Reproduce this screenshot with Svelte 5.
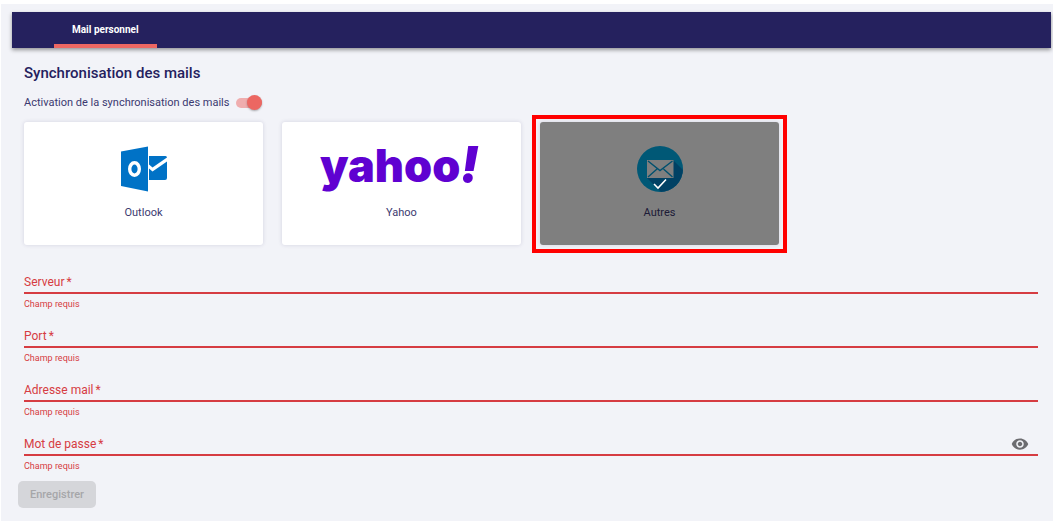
<script>
  let provider = $state("autres");
  let syncEnabled = $state(true);
  let showPassword = $state(false);

  const providers = [
    { id: "outlook", label: "Outlook" },
    { id: "yahoo", label: "Yahoo" },
    { id: "autres", label: "Autres" },
  ];

  const fields = [
    { id: "server", label: "Serveur", type: "text" },
    { id: "port", label: "Port", type: "text" },
    { id: "email", label: "Adresse mail", type: "email" },
    { id: "password", label: "Mot de passe", type: "password" },
  ];

  let values = $state({ server: "", port: "", email: "", password: "" });
  let incomplete = $derived(fields.some((field) => !values[field.id]));

  function inputType(field) {
    return field.type === "password" && showPassword ? "text" : field.type;
  }
</script>

<main class="page">
  <nav class="tabs">
    <a class="tab active" href="#mail">Mail personnel</a>
  </nav>

  <div class="content">
    <h1>Synchronisation des mails</h1>

    <label class="sync">
      <span>Activation de la synchronisation des mails</span>
      <input class="toggle" type="checkbox" role="switch" bind:checked={syncEnabled} />
    </label>

    <div class="providers">
      {#each providers as item}
        <button
          type="button"
          class="card"
          class:selected={provider === item.id}
          aria-pressed={provider === item.id}
          onclick={() => (provider = item.id)}
        >
          {#if item.id === "outlook"}
            <svg width="48" height="46" viewBox="0 0 48 46" aria-hidden="true">
              <path fill="#0072c6" d="M29 10h16.500q1.500 0 1.500 1.500L32.500 21.500 29 18.500z" />
              <path fill="#0072c6" d="M29 22.500l3.500 3L47 15.500V32q0 2-2 2H29z" />
              <path fill="#0072c6" d="M1 5.500L28 .5v45L1 40z" />
              <ellipse cx="14.500" cy="23" rx="4.800" ry="6.200" fill="none" stroke="#fff" stroke-width="3.400" />
            </svg>
          {:else if item.id === "yahoo"}
            <svg class="yahoo" width="164" height="46" viewBox="0 0 164 46" aria-hidden="true">
              <text x="0" y="36">yahoo<tspan class="bang">!</tspan></text>
            </svg>
          {:else}
            <svg width="46" height="46" viewBox="0 0 46 46" aria-hidden="true">
              <defs>
                <clipPath id="disc"><circle cx="23" cy="23" r="23" /></clipPath>
              </defs>
              <circle cx="23" cy="23" r="23" fill="#00b0ed" />
              <path clip-path="url(#disc)" fill="#0082c8" d="M36 14l12 12v22H26L10 32z" />
              <path fill="#fff" d="M10 14h26.500v18H10z" />
              <path
                fill="none"
                stroke="#00a0dc"
                stroke-width="1.400"
                d="M11 15l12 9.500L35.500 15M11 31l9-8M35.500 31l-9-8"
              />
            </svg>
          {/if}
          <span>{item.label}</span>
          {#if provider === item.id}
            <svg class="check" width="14" height="12" viewBox="0 0 14 12" aria-hidden="true">
              <path fill="none" stroke="#fff" stroke-width="1.600" d="M1 6l4 4 8-8.500" />
            </svg>
          {/if}
        </button>
      {/each}
    </div>

    <form id="mail-form">
      {#each fields as field}
        <div class="field">
          <div class="control">
            {#if !values[field.id]}
              <label for={field.id}>{field.label}<span class="star">*</span></label>
            {/if}
            <input
              id={field.id}
              type={inputType(field)}
              aria-label={field.label}
              required
              bind:value={values[field.id]}
            />
            {#if field.type === "password"}
              <button
                type="button"
                class="eye"
                aria-label="Afficher le mot de passe"
                onclick={() => (showPassword = !showPassword)}
              >
                <svg width="18" height="18" viewBox="0 0 24 24" fill="currentColor">
                  <path
                    d="M12 4.500C7 4.500 2.730 7.610 1 12c1.730 4.390 6 7.500 11 7.500s9.270-3.110 11-7.500c-1.730-4.390-6-7.500-11-7.500zM12 17c-2.760 0-5-2.240-5-5s2.240-5 5-5 5 2.240 5 5-2.240 5-5 5zm0-8c-1.660 0-3 1.340-3 3s1.340 3 3 3 3-1.340 3-3-1.340-3-3-3z"
                  />
                </svg>
              </button>
            {/if}
          </div>
          {#if !values[field.id]}
            <p class="error">Champ requis</p>
          {/if}
        </div>
      {/each}
    </form>
  </div>

  <button class="save" form="mail-form" disabled={incomplete}>Enregistrer</button>
</main>

<style>
  :global(body) {
    background: #fff;
  }

  .page {
    box-sizing: border-box;
    min-height: calc(100vh - 4px);
    margin: 4px 0 0 1px;
    padding: 8px 2px 12px 11px;
    background: #f2f3f8;
    color: #25215e;
    font-family: Roboto, sans-serif;
  }

  button,
  input {
    font-family: inherit;
    color: inherit;
  }

  .tabs {
    display: flex;
    height: 36px;
    padding-left: 42px;
    background: #25215e;
    box-shadow: 0 2px 4px rgba(0, 0, 0, 0.4);
  }

  .tab {
    box-sizing: border-box;
    padding: 0 18px;
    border-bottom: 4px solid transparent;
    color: #fff;
    font-size: 10px;
    font-weight: 700;
    line-height: 36px;
    text-decoration: none;
  }

  .tab.active {
    border-color: #ec6762;
  }

  .content {
    padding: 14px 12px 0;
  }

  h1 {
    margin: 0;
    font-size: 15px;
    font-weight: 500;
    line-height: 22px;
  }

  .sync {
    display: flex;
    align-items: center;
    gap: 7px;
    width: fit-content;
    margin-top: 11px;
    color: #3b3970;
    font-size: 11px;
    line-height: 16px;
  }

  .toggle {
    appearance: none;
    position: relative;
    width: 26px;
    height: 10px;
    margin: 0;
    border-radius: 5px;
    background: #c4c4cc;
  }

  .toggle::before {
    content: "";
    position: absolute;
    top: -3px;
    left: 0;
    width: 15px;
    height: 15px;
    border-radius: 50%;
    background: #fff;
    box-shadow: 0 1px 2px rgba(0, 0, 0, 0.3);
  }

  .toggle:checked {
    background: #efadae;
  }

  .toggle:checked::before {
    left: 11px;
    background: #ec6762;
  }

  .providers {
    display: flex;
    flex-wrap: wrap;
    gap: 19px;
    margin-top: 11px;
  }

  .card {
    position: relative;
    display: flex;
    flex-direction: column;
    align-items: center;
    gap: 12px;
    width: 239px;
    padding: 24px 16px;
    border: 0;
    border-radius: 3px;
    background: #fff;
    box-shadow: 0 0 4px rgba(37, 33, 94, 0.15);
    color: #3b3970;
    font-size: 11px;
    line-height: 17px;
  }

  .card.selected::before {
    content: "";
    position: absolute;
    inset: 0;
    border-radius: 3px;
    background: rgba(0, 0, 0, 0.5);
  }

  .card.selected::after {
    content: "";
    position: absolute;
    inset: -7px -8px -8px;
    border: 4px solid #f00;
  }

  .card svg {
    display: block;
    overflow: visible;
  }

  .card .check {
    position: absolute;
    top: 56px;
    left: calc(50% - 7px);
  }

  .yahoo {
    fill: #5f01d1;
    font-family: Inter, sans-serif;
    font-size: 45px;
    font-weight: 900;
  }

  .bang {
    font-size: 49px;
    font-style: italic;
  }

  form {
    margin-top: 27px;
  }

  .field {
    height: 54px;
  }

  .control {
    display: grid;
    grid-template-columns: 1fr auto;
    align-items: center;
    height: 20px;
    margin-right: 1px;
    border-bottom: 2px solid #d63c42;
  }

  .control label {
    grid-area: 1 / 1;
    color: #d63c42;
    font-size: 12px;
    line-height: 20px;
    pointer-events: none;
  }

  .star {
    padding-left: 2px;
  }

  .control input {
    grid-area: 1 / 1;
    min-width: 0;
    padding: 0;
    border: 0;
    outline: 0;
    background: transparent;
    font-size: 12px;
  }

  .eye {
    padding: 0;
    margin-right: 9px;
    border: 0;
    background: none;
    color: #6c6c70;
  }

  .eye svg {
    display: block;
  }

  .error {
    margin: 3px 0 0;
    color: #d63c42;
    font-size: 9px;
    line-height: 14px;
  }

  .save {
    display: block;
    height: 27px;
    margin: -7px 0 0 6px;
    padding: 0 12px;
    border: 0;
    border-radius: 5px;
    background: #d5d6da;
    color: #a6a6a9;
    font-size: 11px;
    font-weight: 500;
  }
</style>
